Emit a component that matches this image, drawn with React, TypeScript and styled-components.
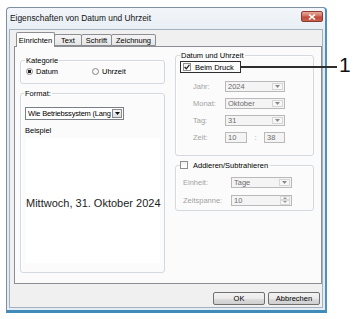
import styled, { createGlobalStyle } from 'styled-components';

const GlobalStyle = createGlobalStyle`
  html, body {
    margin: 0;
    background: #fff;
  }
  body {
    font-family: "Liberation Sans", Arial, sans-serif;
    color: #000;
  }
  * {
    box-sizing: border-box;
  }
`;

function Arrow({ color = '#333' }: { color?: string }) {
  return (
    <svg width="5" height="3" viewBox="0 0 5 3">
      <path d="M0 0 H5 L2.5 3 Z" fill={color} />
    </svg>
  );
}

function Check() {
  return (
    <svg width="6" height="6" viewBox="0 0 6 6">
      <path d="M0.6 3 L2.3 4.8 L5.4 0.9" fill="none" stroke="#222" strokeWidth="1.3" />
    </svg>
  );
}

function Select({ value, width, disabled }: { value: string; width: number; disabled?: boolean }) {
  return (
    <SelectBox $width={width} $disabled={disabled}>
      <span className="value">{value}</span>
      <ArrowBox $disabled={disabled}>
        <Arrow color={disabled ? '#8a8a8a' : '#111'} />
      </ArrowBox>
    </SelectBox>
  );
}

function App() {
  return (
    <>
      <GlobalStyle />
      <Page>
        <Window>
          <TitleBar>
            <span className="title">Eigenschaften von Datum und Uhrzeit</span>
            <CloseButton>
              <svg width="8" height="6" viewBox="0 0 8 6">
                <path d="M1 0.5 L7 5.5 M7 0.5 L1 5.5" stroke="#fff" strokeWidth="1.6" />
              </svg>
            </CloseButton>
          </TitleBar>
          <Client>
            <TabStrip>
              <Tab $width={39} $active>Einrichten</Tab>
              <Tab $width={28}>Text</Tab>
              <Tab $width={31}>Schrift</Tab>
              <Tab $width={45}>Zeichnung</Tab>
            </TabStrip>
            <TabPanel>
              <LeftColumn>
                <Group>
                  <Legend>Kategorie</Legend>
                  <RadioRow>
                    <RadioItem $width={66}>
                      <Radio $checked />
                      Datum
                    </RadioItem>
                    <RadioItem $width={60}>
                      <Radio />
                      Uhrzeit
                    </RadioItem>
                  </RadioRow>
                </Group>
                <FormatGroup>
                  <Legend>Format:</Legend>
                  <Select value="Wie Betriebssystem (Lang" width={99} />
                  <SmallLabel>Beispiel</SmallLabel>
                  <Preview>Mittwoch, 31. Oktober 2024</Preview>
                </FormatGroup>
              </LeftColumn>
              <RightColumn>
                <DateGroup>
                  <Legend>Datum und Uhrzeit</Legend>
                  <Callout>
                    <CheckBox>
                      <Check />
                    </CheckBox>
                    Beim Druck
                  </Callout>
                  <FieldRows $gap={6} $indent={12}>
                    <FieldRow $labelWidth={32}>
                      <span className="label">Jahr:</span>
                      <Select value="2024" width={60} disabled />
                    </FieldRow>
                    <FieldRow $labelWidth={32}>
                      <span className="label">Monat:</span>
                      <Select value="Oktober" width={60} disabled />
                    </FieldRow>
                    <FieldRow $labelWidth={32}>
                      <span className="label">Tag:</span>
                      <Select value="31" width={60} disabled />
                    </FieldRow>
                    <FieldRow $labelWidth={32}>
                      <span className="label">Zeit:</span>
                      <TextField $width={22}>10</TextField>
                      <Colon>:</Colon>
                      <TextField $width={21}>38</TextField>
                    </FieldRow>
                  </FieldRows>
                </DateGroup>
                <AddGroup>
                  <CheckLegend>
                    <CheckBox />
                    Addieren/Subtrahieren
                  </CheckLegend>
                  <FieldRows $gap={7} $indent={2}>
                    <FieldRow $labelWidth={48}>
                      <span className="label">Einheit:</span>
                      <Select value="Tage" width={61} disabled />
                    </FieldRow>
                    <FieldRow $labelWidth={48}>
                      <span className="label">Zeitspanne:</span>
                      <SpinBox>
                        <span className="value">10</span>
                        <SpinButtons>
                          <span>
                            <svg width="4" height="2" viewBox="0 0 4 2">
                              <path d="M0 2 H4 L2 0 Z" fill="#9a9a9a" />
                            </svg>
                          </span>
                          <span>
                            <svg width="4" height="2" viewBox="0 0 4 2">
                              <path d="M0 0 H4 L2 2 Z" fill="#9a9a9a" />
                            </svg>
                          </span>
                        </SpinButtons>
                      </SpinBox>
                    </FieldRow>
                  </FieldRows>
                </AddGroup>
              </RightColumn>
            </TabPanel>
            <ButtonRow>
              <Button>OK</Button>
              <Button>Abbrechen</Button>
            </ButtonRow>
          </Client>
        </Window>
        <CalloutLine />
        <CalloutNumber>1</CalloutNumber>
      </Page>
    </>
  );
}

const Page = styled.div`
  position: relative;
  width: 360px;
  height: 319px;
  padding: 7px 0 0 6px;
  overflow: hidden;
`;

const Window = styled.div`
  width: 321px;
  height: 306px;
  display: flex;
  flex-direction: column;
  padding: 0 2px 2px 2px;
  border: 1px solid #7d8fa2;
  border-right: 2px solid #4e92bb;
  border-bottom: 3px solid #3f8cb8;
  border-radius: 4px 4px 0 0;
  background: linear-gradient(#f3f6fa, #e4ebf3 30px);
`;

const TitleBar = styled.div`
  height: 21px;
  display: flex;
  justify-content: space-between;
  align-items: flex-start;

  .title {
    margin-top: 5px;
    padding-left: 1px;
    font-size: 8.4px;
    line-height: 10px;
    color: #111;
  }
`;

const CloseButton = styled.div`
  width: 22px;
  height: 11px;
  margin-top: 3px;
  display: flex;
  align-items: center;
  justify-content: center;
  border: 1px solid #8c3a32;
  border-radius: 2px;
  background: linear-gradient(#e9a99b, #d2705f 45%, #c04a3a 55%, #c9614f);
`;

const Client = styled.div`
  flex: 1;
  display: flex;
  flex-direction: column;
  padding: 2px 0 2px 4px;
  border: 1px solid #a4b2c0;
  background: #f0f0f0;
`;

const TabStrip = styled.div`
  height: 15px;
  display: flex;
  align-items: flex-end;
  padding-left: 2px;
  margin-bottom: -1px;
  position: relative;
  z-index: 1;
`;

const Tab = styled.div<{ $width: number; $active?: boolean }>`
  width: ${({ $width }) => $width}px;
  height: ${({ $active }) => ($active ? 15 : 12)}px;
  margin-left: ${({ $active }) => ($active ? 0 : -1)}px;
  margin-bottom: ${({ $active }) => ($active ? 0 : 1)}px;
  display: flex;
  align-items: center;
  justify-content: center;
  font-size: 7.5px;
  border: 1px solid #8c8e94;
  border-bottom: ${({ $active }) => ($active ? 'none' : '1px solid #8c8e94')};
  border-radius: 2px 2px 0 0;
  background: ${({ $active }) => ($active ? '#fcfcfc' : 'linear-gradient(#f4f4f4, #e6e6e6)')};
  &:first-child {
    margin-left: 0;
  }
`;

const TabPanel = styled.div`
  flex: 1;
  display: flex;
  gap: 10px;
  padding-left: 5px;
  border: 1px solid #8c8e94;
  background: #fbfbfb;
`;

const LeftColumn = styled.div`
  width: 145px;
  margin-top: 9px;
  display: flex;
  flex-direction: column;
  gap: 5px;
`;

const RightColumn = styled.div`
  width: 139px;
  margin-top: 4px;
  display: flex;
  flex-direction: column;
  gap: 5px;
`;

const Group = styled.fieldset`
  margin: 0;
  min-width: 0;
  padding: 0 5px 7px;
  border: 1px solid #d3d9de;
  border-radius: 3px;
  box-shadow: inset 1px 1px 0 #fff;
  font-size: 7.5px;
`;

const Legend = styled.legend`
  margin-left: -1px;
  padding: 0 1px;
  font-size: 7.5px;
  line-height: 9px;
`;

const CheckLegend = styled.legend`
  margin-left: -1px;
  padding: 0 2px 0 0;
  display: flex;
  align-items: center;
  gap: 5px;
  font-size: 7.5px;
  line-height: 9px;
`;

const RadioRow = styled.div`
  display: flex;
  height: 10px;
  margin-top: 1px;
`;

const RadioItem = styled.div<{ $width: number }>`
  width: ${({ $width }) => $width}px;
  display: flex;
  align-items: center;
  gap: 3px;
  font-size: 7.5px;
`;

const Radio = styled.span<{ $checked?: boolean }>`
  width: 7px;
  height: 7px;
  border-radius: 50%;
  border: 1px solid #8b8b8b;
  background: radial-gradient(circle, ${({ $checked }) => ($checked ? '#1e1e1e 1.5px' : '#fff 1.5px')}, #f4f4f4 2px, #dcdcdc);
`;

const FormatGroup = styled(Group)`
  padding: 9px 5px 9px 4px;
`;

const SelectBox = styled.div<{ $width: number; $disabled?: boolean }>`
  width: ${({ $width }) => $width}px;
  height: ${({ $disabled }) => ($disabled ? 11 : 13)}px;
  display: flex;
  align-items: stretch;
  border: 1px solid ${({ $disabled }) => ($disabled ? '#b9b9b9' : '#7a7f87')};
  background: ${({ $disabled }) => ($disabled ? '#f4f4f4' : '#fff')};
  font-size: 7.5px;
  color: ${({ $disabled }) => ($disabled ? '#6d6d6d' : '#000')};

  .value {
    flex: 1;
    min-width: 0;
    overflow: hidden;
    white-space: nowrap;
    padding-left: 2px;
    letter-spacing: ${({ $disabled }) => ($disabled ? 0 : -0.2)}px;
    display: flex;
    align-items: center;
  }
`;

const ArrowBox = styled.span<{ $disabled?: boolean }>`
  width: ${({ $disabled }) => ($disabled ? 11 : 10)}px;
  flex-shrink: 0;
  margin: 1px;
  display: flex;
  align-items: center;
  justify-content: center;
  border: 1px solid ${({ $disabled }) => ($disabled ? '#d6d6d6' : '#8a8a8a')};
  background: ${({ $disabled }) => ($disabled ? '#f7f7f7' : 'linear-gradient(#f6f6f6, #dedede)')};
`;

const SmallLabel = styled.div`
  margin-top: 6px;
  height: 9px;
  line-height: 9px;
  font-size: 7.5px;
`;

const Preview = styled.div`
  width: 134px;
  height: 125px;
  margin: 3px 0 0 1px;
  padding-top: 5px;
  display: flex;
  align-items: center;
  background: #fff;
  font-size: 11px;
  color: #1c1c1c;
  white-space: nowrap;
`;

const DateGroup = styled(Group)`
  padding: 1px 5px 12px;
`;

const AddGroup = styled(Group)`
  padding: 7px 5px 4px;
`;

const Callout = styled.div`
  width: 61px;
  height: 12px;
  margin-left: -1px;
  padding-left: 2px;
  display: flex;
  align-items: center;
  gap: 4px;
  border: 1px solid #2e2e2e;
  font-size: 7.5px;
`;

const CheckBox = styled.span`
  width: 8px;
  height: 8px;
  display: flex;
  align-items: center;
  justify-content: center;
  border: 1px solid #8e8f8f;
  background: linear-gradient(#f1f1f1, #fff);
`;

const FieldRows = styled.div<{ $gap: number; $indent: number }>`
  display: flex;
  flex-direction: column;
  gap: ${({ $gap }) => $gap}px;
  padding-left: ${({ $indent }) => $indent}px;
  margin-top: ${({ $indent }) => ($indent > 5 ? 7.5 : 0)}px;
`;

const FieldRow = styled.div<{ $labelWidth: number }>`
  height: 11px;
  display: flex;
  align-items: center;
  font-size: 7.5px;

  .label {
    width: ${({ $labelWidth }) => $labelWidth}px;
    color: #a3a3a3;
  }
`;

const TextField = styled.div<{ $width: number }>`
  width: ${({ $width }) => $width}px;
  height: 11px;
  padding-left: 2px;
  display: flex;
  align-items: center;
  border: 1px solid #b9b9b9;
  background: #f4f4f4;
  color: #6d6d6d;
`;

const Colon = styled.span`
  width: 17px;
  text-align: center;
  color: #9a9a9a;
`;

const SpinBox = styled.div`
  width: 61px;
  height: 11px;
  display: flex;
  border: 1px solid #b9b9b9;
  background: #f4f4f4;
  color: #6d6d6d;

  .value {
    flex: 1;
    padding-left: 2px;
    display: flex;
    align-items: center;
  }
`;

const SpinButtons = styled.span`
  width: 10px;
  margin: 0 1px 0 0;
  display: flex;
  flex-direction: column;

  span {
    flex: 1;
    display: flex;
    align-items: center;
    justify-content: center;
    border: 1px solid #dadada;
    background: #f7f7f7;
  }
`;

const ButtonRow = styled.div`
  display: flex;
  justify-content: flex-end;
  gap: 3px;
  margin-top: 8px;
  padding-right: 2px;
`;

const Button = styled.div`
  width: 52px;
  height: 13px;
  display: flex;
  align-items: center;
  justify-content: center;
  font-size: 7.5px;
  border: 1px solid #707070;
  border-radius: 2px;
  background: linear-gradient(#f2f2f2, #ebebeb 50%, #dddddd 51%, #cfcfcf);
`;

const CalloutLine = styled.div`
  position: absolute;
  left: 241px;
  top: 66px;
  width: 96px;
  height: 1.5px;
  background: #2e2e2e;
`;

const CalloutNumber = styled.div`
  position: absolute;
  left: 339px;
  top: 54px;
  font-size: 21px;
  line-height: 21px;
  color: #111;
`;

export default App;
